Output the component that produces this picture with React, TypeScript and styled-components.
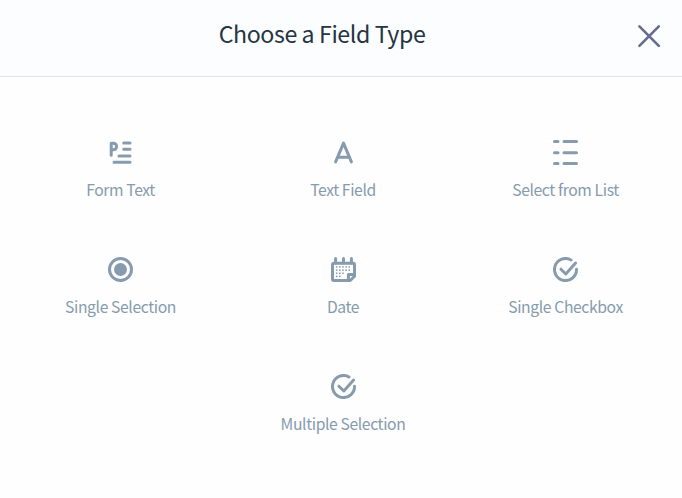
import React from "react";
import styled, { createGlobalStyle } from "styled-components";

const GlobalStyle = createGlobalStyle`
  * { box-sizing: border-box; }
  body {
    margin: 0;
    background: #fefefe;
    font-family: "Source Sans Pro", "Noto Sans CJK SC", sans-serif;
  }
`;

const Dialog = styled.section`
  width: 682px;
  height: 498px;
  overflow: hidden;
`;

const Header = styled.header`
  display: grid;
  grid-template-columns: 1fr 60px;
  height: 77px;
  background: #fcfdfe;
  border-bottom: 1px solid #dfe3eb;
`;

const Title = styled.h1`
  margin: 0;
  padding: 15px 0 0 22px;
  font-size: 23.2px;
  letter-spacing: -0.42px;
  line-height: 36px;
  font-weight: 400;
  text-align: center;
  white-space: nowrap;
  color: #253542;
`;

const CloseButton = styled.button`
  display: block;
  width: 24px;
  height: 24px;
  margin: 24px 0 0 15px;
  padding: 0;
  border: 0;
  background: none;
  color: #666b8f;
  svg { display: block; }
`;

const Options = styled.div`
  display: flex;
  flex-wrap: wrap;
  justify-content: center;
  width: 667.5px;
  margin-left: 9.25px;
  padding-top: 63px;
`;

const Option = styled.button`
  display: flex;
  flex-direction: column;
  align-items: center;
  width: 222.5px;
  height: 117px;
  padding: 0;
  border: 0;
  background: none;
  color: #869bad;
  font-family: inherit;
  svg { display: block; flex: none; }
`;

const Label = styled.span`
  margin-top: 13px;
  font-size: 15.7px;
  letter-spacing: -0.38px;
  line-height: 24px;
  white-space: nowrap;
`;

const Icon = ({ children }: { children: React.ReactNode }) => (
  <svg width="25" height="25" viewBox="0 0 25 25" fill="none" stroke="currentColor" strokeWidth="3" strokeLinecap="round" strokeLinejoin="round">
    {children}
  </svg>
);

const FormTextIcon = () => (
  <Icon>
    <path d="M3.2 15.3V3.2H5.3A3.3 3.3 0 0 1 5.3 9.8H3.2" />
    <path d="M15.7 3.1H22M15.7 9.3H22M11 15.9H22M6 22.2H22" />
  </Icon>
);

const LetterIcon = () => (
  <Icon>
    <path d="M4.6 21.9L12.5 3.1L20.4 21.9M6.5 17.2H18.5" />
  </Icon>
);

const ListIcon = () => (
  <Icon>
    <path d="M1.5 1.6H5M11 1.6H23.5M1.5 12.7H5M11 12.7H23.5M1.5 23.5H5M11 23.5H23.5" />
  </Icon>
);

const RadioIcon = () => (
  <Icon>
    <circle cx="12.5" cy="12.5" r="11" />
    <circle cx="12.5" cy="12.5" r="6.5" fill="currentColor" stroke="none" />
  </Icon>
);

const dotRows = [5, 5, 3, 2];
const dots = dotRows.flatMap((count, row) =>
  Array.from({ length: count }, (_, col) => ({ x: 4.9 + col * 3.15, y: 9.2 + row * 3.15 })),
);

const CalendarIcon = () => (
  <Icon>
    <path d="M4.6 1.5V6M12.5 1.5V6M20.4 1.5V6" />
    <path d="M3 6.3H22Q23.5 6.3 23.5 8V19.3L19.3 23.5H3Q1.5 23.5 1.5 22V8Q1.5 6.3 3 6.3Z" />
    <path d="M17.4 22.5V17.4H22.5" />
    {dots.map(({ x, y }) => (
      <rect key={`${x}-${y}`} x={x} y={y} width="1.5" height="1.5" fill="currentColor" stroke="none" />
    ))}
  </Icon>
);

const CheckIcon = () => (
  <Icon>
    <path d="M18 3A11 11 0 1 0 23.5 12.2" />
    <path d="M7.9 12.2L12.8 17L22.6 6.1" />
  </Icon>
);

const fields = [
  { label: "Form Text", Glyph: FormTextIcon },
  { label: "Text Field", Glyph: LetterIcon },
  { label: "Select from List", Glyph: ListIcon },
  { label: "Single Selection", Glyph: RadioIcon },
  { label: "Date", Glyph: CalendarIcon },
  { label: "Single Checkbox", Glyph: CheckIcon },
  { label: "Multiple Selection", Glyph: CheckIcon },
];

export default function App() {
  return (
    <Dialog>
      <GlobalStyle />
      <Header>
        <Title>Choose a Field Type</Title>
        <CloseButton aria-label="Close">
          <svg width="24" height="24" viewBox="0 0 24 24" stroke="currentColor" strokeWidth="2.6" strokeLinecap="round">
            <path d="M2.4 2.4L21.8 21.8M21.8 2.4L2.4 21.8" />
          </svg>
        </CloseButton>
      </Header>
      <Options>
        {fields.map(({ label, Glyph }) => (
          <Option key={label}>
            <Glyph />
            <Label>{label}</Label>
          </Option>
        ))}
      </Options>
    </Dialog>
  );
}
